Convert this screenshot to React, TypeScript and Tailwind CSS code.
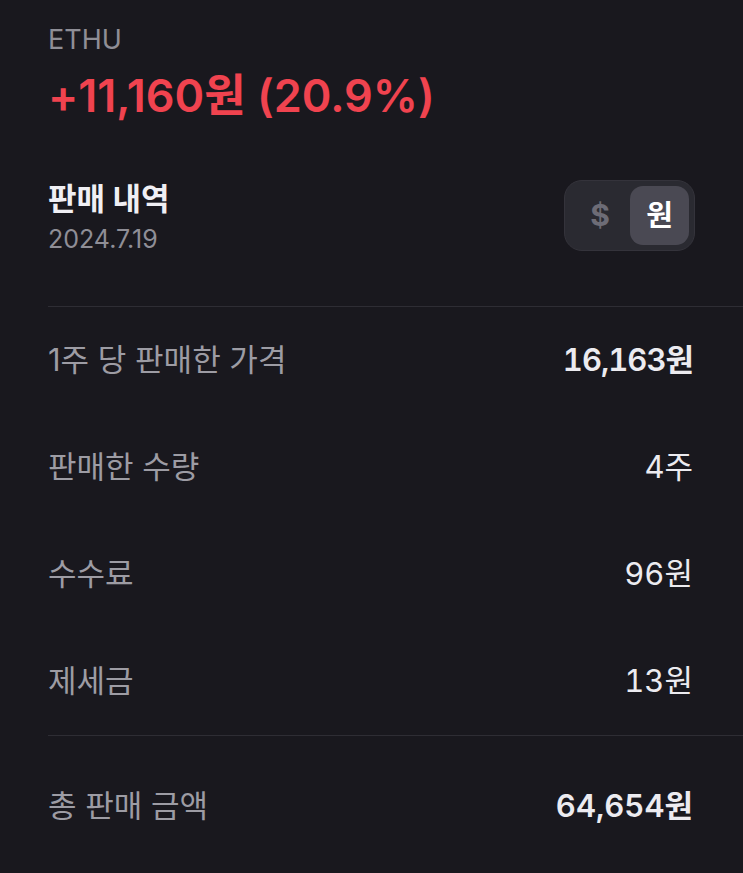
import React from "react";

const font = { fontFamily: 'Inter, "Noto Sans CJK KR", "Noto Sans", sans-serif' };

function Row({ label, value, bold }: { label: string; value: string; bold?: boolean }) {
  return (
    <div className="flex h-[107px] items-center justify-between pr-[50px]">
      <span className="text-[31px] text-[#9d9ca4]">{label}</span>
      <span className={`text-[31px] tabular-nums text-[#ecebf0] ${bold ? "font-semibold tracking-[-1px]" : "font-normal"}`}>{value}</span>
    </div>
  );
}

export default function App() {
  return (
    <div className="w-[743px] h-[873px] overflow-hidden bg-[#19181e] pl-[48px] pt-[22px]" style={font}>
      <div className="text-[27px] leading-[36px] text-[#8f8e96]">ETHU</div>
      <div className="mt-[12px] text-[45px] leading-[52px] font-semibold text-[#f0434f]">+11,160원 (20.9%)</div>

      <div className="mt-[58px] flex items-start justify-between pr-[48px]">
        <div className="flex flex-col">
          <div className="mt-[1px] text-[31px] leading-[36px] font-bold text-[#f0eff4]">판매 내역</div>
          <div className="mt-[7px] text-[25px] leading-[30px] text-[#8f8e96]">2024.7.19</div>
        </div>
        <div className="flex h-[71px] w-[131px] items-center rounded-[18px] border border-[#34333b] bg-[#2a2a31] p-[5px]">
          <div className="flex flex-1 items-center justify-center text-[30px] font-bold text-[#6d6c76]">$</div>
          <div className="flex h-[59px] w-[59px] items-center justify-center rounded-[13px] bg-[#4a4953] text-[29px] font-bold text-white">원</div>
        </div>
      </div>

      <div className="mt-[52px] h-px bg-[#2e2d34]" />
      <Row label="1주 당 판매한 가격" value="16,163원" bold />
      <Row label="판매한 수량" value="4주" />
      <Row label="수수료" value="96원" />
      <Row label="제세금" value="13원" />
      <div className="h-px bg-[#2e2d34]" />
      <div className="flex items-center justify-between pr-[50px] pt-[52px]">
        <span className="text-[31px] leading-[36px] text-[#9d9ca4]">총 판매 금액</span>
        <span className="text-[31px] leading-[36px] tabular-nums font-semibold text-[#ecebf0]">64,654원</span>
      </div>
    </div>
  );
}
